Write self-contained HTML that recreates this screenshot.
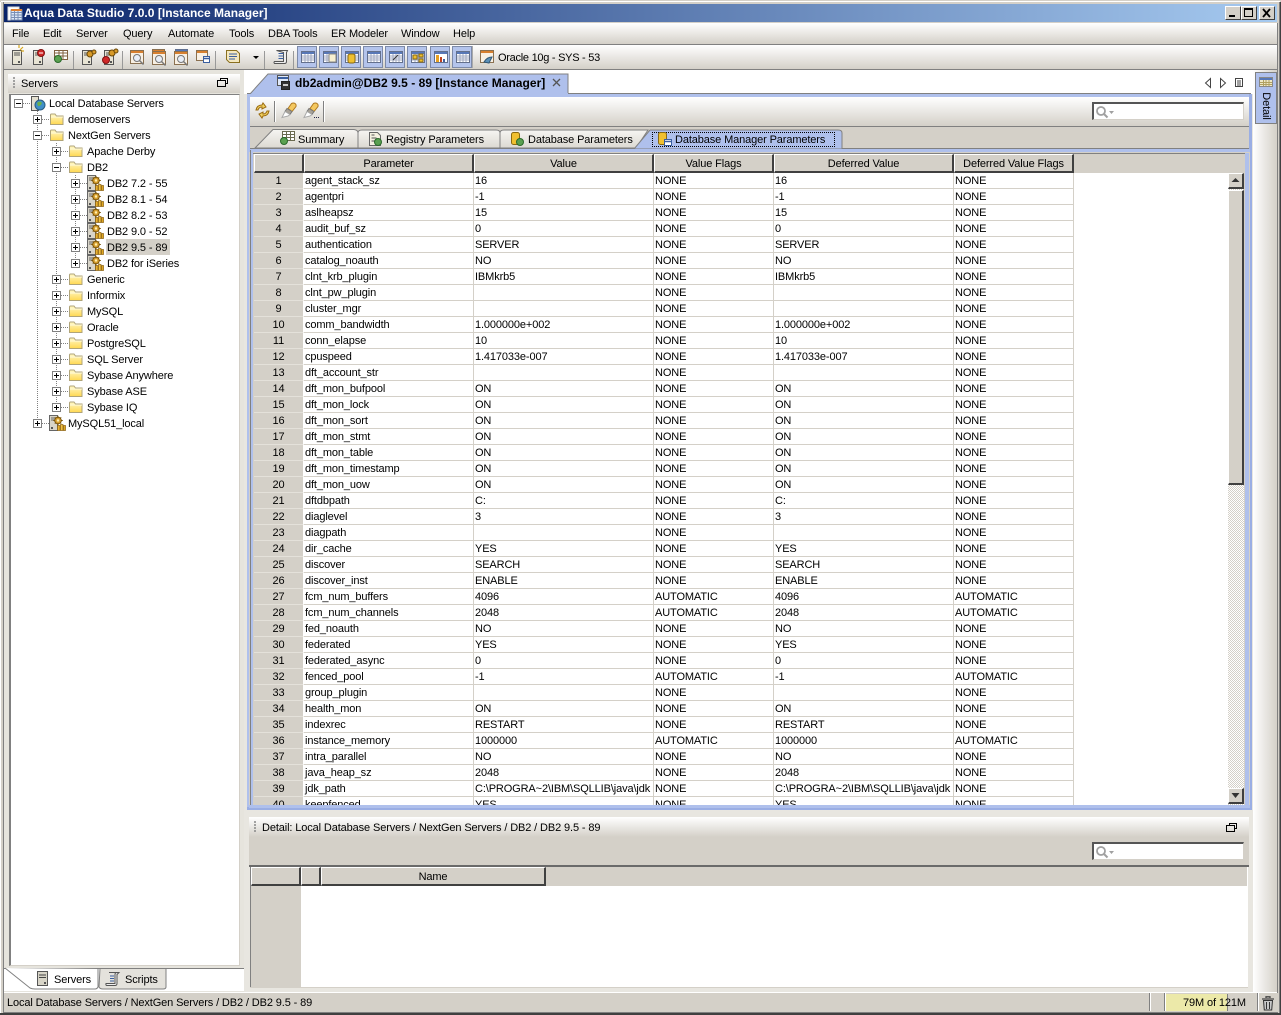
<!DOCTYPE html>
<html><head><meta charset="utf-8"><title>Aqua Data Studio 7.0.0 [Instance Manager]</title>
<style>
html,body{margin:0;padding:0;background:#d4d0c8}
body{position:relative;width:1281px;height:1015px;overflow:hidden;font:11px/16px "Liberation Sans",sans-serif;color:#000;letter-spacing:-.12px}
.a{position:absolute}
.t{position:absolute;white-space:nowrap;line-height:16px;height:16px;margin-top:1px}
.grad{background:linear-gradient(#fff,#d4d0c8)}
table{border-collapse:separate;border-spacing:0;table-layout:fixed;position:absolute;left:0;top:0;width:820px}
td{height:13px;padding:2px 0 0 1px;border-right:1px solid #d4d0c8;border-bottom:1px solid #d4d0c8;line-height:13px;white-space:nowrap;overflow:hidden;box-sizing:content-box}
td.r{background:#d4d0c8;text-align:center;border-right:1px solid #fff;border-bottom:1px solid #e4e1da;padding:2px 0 0 0}
.h{position:absolute;background:#d4d0c8;border-top:1px solid #fff;border-left:1px solid #fff;border-right:2px solid #404040;border-bottom:2px solid #404040;box-sizing:border-box;text-align:center;line-height:18px}
.tb{position:absolute;top:46px;width:20px;height:22px;background:#b4c4ec;border:1px solid #7d8aa8;box-sizing:border-box}
.sep{position:absolute;width:1px;background:#808080;border-right:1px solid #fff}
.search{position:absolute;width:152px;height:18px;background:#fff;border-top:2px solid #555;border-left:2px solid #555;border-right:1px solid #d4d0c8;border-bottom:1px solid #d4d0c8;box-sizing:border-box}
svg{position:absolute;overflow:visible}
</style></head><body>
<!-- chrome -->
<div class="a" style="left:0;top:0;width:1281px;height:1px;background:#d4d0c8"></div>
<div class="a" style="left:1px;top:1px;width:1279px;height:1px;background:#fff"></div>
<div class="a" style="left:4px;top:4px;width:1273px;height:18px;background:linear-gradient(90deg,#0a246a,#a6caf0)"></div>
<div class="t" style="left:24px;top:4px;color:#fff;font-weight:bold;font-size:12px;letter-spacing:.02px">Aqua Data Studio 7.0.0 [Instance Manager]</div>
<svg style="left:7px;top:6px" width="16" height="16"><rect x="1" y="1" width="11" height="13" fill="#fff" stroke="#ddd"/><rect x="4" y="4" width="11" height="10" fill="#dfe8f8" stroke="#7a8fb5"/><path d="M4 6.500h11M4 9h11M4 11.500h11M7.500 4v10M11 4v10" stroke="#7a8fb5"/><rect x="4" y="3" width="11" height="2" fill="#e08030"/></svg>
<!-- window buttons -->
<div class="a" style="left:1225px;top:6px;width:16px;height:14px;background:#d4d0c8;border-top:1px solid #fff;border-left:1px solid #fff;border-right:1px solid #404040;border-bottom:1px solid #404040;box-sizing:border-box"><div class="a" style="left:3px;top:8px;width:6px;height:2px;background:#000"></div></div>
<div class="a" style="left:1241px;top:6px;width:16px;height:14px;background:#d4d0c8;border-top:1px solid #fff;border-left:1px solid #fff;border-right:1px solid #404040;border-bottom:1px solid #404040;box-sizing:border-box"><div class="a" style="left:2px;top:1px;width:9px;height:9px;border:1px solid #000;border-top-width:2px;box-sizing:border-box"></div></div>
<div class="a" style="left:1259px;top:6px;width:16px;height:14px;background:#d4d0c8;border-top:1px solid #fff;border-left:1px solid #fff;border-right:1px solid #404040;border-bottom:1px solid #404040;box-sizing:border-box"><svg style="left:2px;top:1px" width="10" height="10"><path d="M1 1l7 8M8 1l-7 8" stroke="#000" stroke-width="1.800"/></svg></div>

<div class="a grad" style="left:4px;top:23px;width:1273px;height:21px"></div>
<div class="a" style="left:4px;top:44px;width:1273px;height:1px;background:#808080"></div>
<div class="t" style="left:12px;top:25px">File</div>
<div class="t" style="left:43px;top:25px">Edit</div>
<div class="t" style="left:76px;top:25px">Server</div>
<div class="t" style="left:123px;top:25px">Query</div>
<div class="t" style="left:168px;top:25px">Automate</div>
<div class="t" style="left:229px;top:25px">Tools</div>
<div class="t" style="left:268px;top:25px">DBA Tools</div>
<div class="t" style="left:331px;top:25px">ER Modeler</div>
<div class="t" style="left:401px;top:25px">Window</div>
<div class="t" style="left:453px;top:25px">Help</div>

<div class="a grad" style="left:4px;top:45px;width:1273px;height:24px"></div>
<div class="a" style="left:4px;top:69px;width:1273px;height:1px;background:#808080"></div>

<!-- main white areas -->
<div class="a" style="left:4px;top:70px;width:240px;height:922px;background:#e6e4dd"></div>
<div class="a" style="left:244px;top:70px;width:1009px;height:922px;background:#e8e6e0"></div>
<div class="a" style="left:244px;top:70px;width:1033px;height:24px;background:#fff"></div>
<div class="a" style="left:1253px;top:70px;width:24px;height:922px;background:linear-gradient(90deg,#fff,#d4d0c8)"></div>
<div class="a" style="left:1277px;top:23px;width:1px;height:970px;background:#808080"></div>

<!-- Left panel -->
<div class="a grad" style="left:8px;top:74px;width:232px;height:19px"></div>
<div class="t" style="left:21px;top:75px">Servers</div>
<div class="a" style="left:9px;top:94px;width:231px;height:872px;background:#fff;border:1px solid #808080;border-right-color:#d4d0c8;border-bottom-color:#d4d0c8;box-sizing:border-box;border-left-width:2px;border-top-width:1px"></div>
<div class="a" style="left:4px;top:968px;width:240px;height:23px;background:#fff;border-top:1px solid #808080;box-sizing:border-box"></div>
<!-- bottom tabs -->
<svg style="left:4px;top:966px" width="170" height="26">
<path d="M1 2 L26 22 Q28 23 31 23 H91 Q93 23 94 21 V3" fill="#fff" stroke="#808080"/>
<path d="M95 21 Q96 23 99 23 H159 Q162 23 162 21 V2.500 H96 Z" fill="#e4e2dc" stroke="#808080"/>
</svg>
<svg style="left:37px;top:971px" width="12" height="16"><rect x="0.500" y="0.500" width="10" height="14" fill="#d8d5c8" stroke="#555"/><path d="M2 4h7M2 6.500h7" stroke="#444"/><rect x="7" y="11" width="2" height="2" fill="#555"/></svg>
<svg style="left:105px;top:971px" width="16" height="16"><path d="M4 1.500h10l-2 2v9q0 2-2 2H2q-1.500 0-1-2h9V3.500q0-2 2-2" fill="#eee" stroke="#555"/><path d="M5 5h4M5 7.500h4M5 10h4" stroke="#3a5fa0"/></svg>
<div class="t" style="left:54px;top:971px">Servers</div>
<div class="t" style="left:125px;top:971px">Scripts</div>

<!-- Tree -->
<svg style="left:0;top:0" width="240" height="440">
<defs>
<linearGradient id="fg" x1="0" y1="0" x2="0" y2="1"><stop offset="0" stop-color="#fff8c8"/><stop offset="1" stop-color="#ffd850"/></linearGradient>
<symbol id="fo" width="16" height="16" overflow="visible"><path d="M1.500 4q0-1 1-1h3.500l1.500 2h6.500v8.500h-12.500z" fill="url(#fg)" stroke="#b0a478"/><path d="M2 6h12" stroke="#fffbe0"/></symbol>
<symbol id="ds" width="18" height="17" overflow="visible"><rect x="0.500" y="0.500" width="8" height="15" fill="#d8d4c8" stroke="#666"/><path d="M2 3h5M2 5h5" stroke="#666"/><rect x="2" y="12" width="2" height="2" fill="#555"/><circle cx="9" cy="5.500" r="3.300" fill="#d8a030" stroke="#7a5408"/><circle cx="9" cy="5.500" r="1.200" fill="#fff0b0"/><path d="M9 .8v1.500M9 8.800v1.500M4.300 5.500h1.500M12.300 5.500h1.500M5.800 2.300l1 1M12.200 2.300l-1 1M5.800 8.700l1-1M12.200 8.700l-1-1" stroke="#7a5408"/><rect x="8.500" y="10.500" width="2.500" height="5" fill="#e8b030" stroke="#8a6010" stroke-width=".7"/><rect x="11.500" y="9.500" width="2.500" height="6" fill="#f0c040" stroke="#8a6010" stroke-width=".7"/><rect x="14.500" y="10.500" width="2" height="5" fill="#e0a820" stroke="#8a6010" stroke-width=".7"/></symbol>
<symbol id="pl" width="9" height="9" overflow="visible"><rect x="0.500" y="0.500" width="8" height="8" fill="#fff" stroke="#808080"/><path d="M2 4.500h5M4.500 2v5" stroke="#000"/></symbol>
<symbol id="mi" width="9" height="9" overflow="visible"><rect x="0.500" y="0.500" width="8" height="8" fill="#fff" stroke="#808080"/><path d="M2 4.500h5" stroke="#000"/></symbol>
</defs>
<g stroke="#808080" stroke-dasharray="1 1" fill="none">
<path d="M37.500 111V419M56.500 143V403M75.500 175V259"/>
<path d="M23 103.500h7M42 119.500h7M42 135.500h7M42 423.500h7M61 151.500h7M61 167.500h7M61 279.500h7M61 295.500h7M61 311.500h7M61 327.500h7M61 343.500h7M61 359.500h7M61 375.500h7M61 391.500h7M61 407.500h7"/>
<path d="M80 183.500h7M80 199.500h7M80 215.500h7M80 231.500h7M80 247.500h7M80 263.500h7"/>
</g>
<use href="#mi" x="14" y="99"/><use href="#pl" x="33" y="115"/><use href="#mi" x="33" y="131"/><use href="#pl" x="33" y="419"/>
<use href="#pl" x="52" y="147"/><use href="#mi" x="52" y="163"/>
<use href="#pl" x="52" y="275"/><use href="#pl" x="52" y="291"/><use href="#pl" x="52" y="307"/><use href="#pl" x="52" y="323"/><use href="#pl" x="52" y="339"/><use href="#pl" x="52" y="355"/><use href="#pl" x="52" y="371"/><use href="#pl" x="52" y="387"/><use href="#pl" x="52" y="403"/>
<use href="#pl" x="71" y="179"/><use href="#pl" x="71" y="195"/><use href="#pl" x="71" y="211"/><use href="#pl" x="71" y="227"/><use href="#pl" x="71" y="243"/><use href="#pl" x="71" y="259"/>
<use href="#fo" x="49" y="111"/><use href="#fo" x="49" y="127"/>
<use href="#fo" x="68" y="143"/><use href="#fo" x="68" y="159"/><use href="#fo" x="68" y="271"/><use href="#fo" x="68" y="287"/><use href="#fo" x="68" y="303"/><use href="#fo" x="68" y="319"/><use href="#fo" x="68" y="335"/><use href="#fo" x="68" y="351"/><use href="#fo" x="68" y="367"/><use href="#fo" x="68" y="383"/><use href="#fo" x="68" y="399"/>
<use href="#ds" x="87" y="175"/><use href="#ds" x="87" y="191"/><use href="#ds" x="87" y="207"/><use href="#ds" x="87" y="223"/><use href="#ds" x="87" y="239"/><use href="#ds" x="87" y="255"/>
<use href="#ds" x="49" y="415"/>
<rect x="31.500" y="96.500" width="7" height="14" fill="#e4e0d0" stroke="#555"/><circle cx="40" cy="105" r="5" fill="#3f8fc8" stroke="#2a5a80"/><path d="M37 103q3-3 5 0q-1 3-4 3z" fill="#6ab04a"/>
</svg>
<div class="a" style="left:106px;top:239px;width:64px;height:16px;background:#d4d0c8"></div>
<div class="t" style="left:49px;top:95px">Local Database Servers</div>
<div class="t" style="left:68px;top:111px">demoservers</div>
<div class="t" style="left:68px;top:127px">NextGen Servers</div>
<div class="t" style="left:87px;top:143px">Apache Derby</div>
<div class="t" style="left:87px;top:159px">DB2</div>
<div class="t" style="left:107px;top:175px">DB2 7.2 - 55</div>
<div class="t" style="left:107px;top:191px">DB2 8.1 - 54</div>
<div class="t" style="left:107px;top:207px">DB2 8.2 - 53</div>
<div class="t" style="left:107px;top:223px">DB2 9.0 - 52</div>
<div class="t" style="left:107px;top:239px">DB2 9.5 - 89</div>
<div class="t" style="left:107px;top:255px">DB2 for iSeries</div>
<div class="t" style="left:87px;top:271px">Generic</div>
<div class="t" style="left:87px;top:287px">Informix</div>
<div class="t" style="left:87px;top:303px">MySQL</div>
<div class="t" style="left:87px;top:319px">Oracle</div>
<div class="t" style="left:87px;top:335px">PostgreSQL</div>
<div class="t" style="left:87px;top:351px">SQL Server</div>
<div class="t" style="left:87px;top:367px">Sybase Anywhere</div>
<div class="t" style="left:87px;top:383px">Sybase ASE</div>
<div class="t" style="left:87px;top:399px">Sybase IQ</div>
<div class="t" style="left:68px;top:415px">MySQL51_local</div>

<!-- Right: editor tab -->
<div class="a" style="left:247px;top:93px;width:1004px;height:1px;background:#808080"></div>
<svg style="left:244px;top:70px" width="330" height="26"><path d="M6 24 L24 4 H324 V24 Z" fill="#afc0ec"/><path d="M6 24 L24 4 H324 V23" fill="none" stroke="#808080"/></svg>
<div class="t" style="left:295px;top:74px;font-weight:bold;font-size:12px;letter-spacing:.03px">db2admin@DB2 9.5 - 89 [Instance Manager]</div>
<svg style="left:552px;top:78px" width="10" height="10"><path d="M1 1l7 7M8 1l-7 7" stroke="#555" stroke-width="1.300"/></svg>
<svg style="left:277px;top:75px" width="15" height="16"><rect x="0.500" y="0.500" width="11" height="10" fill="#dfe8f8" stroke="#555"/><path d="M1 3h10" stroke="#3a5fa0" stroke-width="2"/><rect x="4.500" y="6.500" width="8" height="8" fill="#333" stroke="#222"/><rect x="6" y="9" width="5" height="2" fill="#ccc"/></svg>
<svg style="left:1202px;top:77px" width="44" height="12"><path d="M8.500 1.500L3.500 6l5 4.500z" fill="#fff" stroke="#444"/><path d="M18.500 1.500l5 4.500-5 4.500z" fill="#fff" stroke="#444"/><rect x="33.500" y="1.500" width="7" height="8" fill="#fff" stroke="#444"/><path d="M35 4h4M35 6h4M35 8h4" stroke="#444"/></svg>
<!-- detail side tab -->
<div class="a" style="left:1255px;top:72px;width:22px;height:52px;background:#afc0ec;border:1px solid #808080;box-sizing:border-box"></div>
<svg style="left:1259px;top:77px" width="14" height="11"><rect x="0.500" y="0.500" width="13" height="9" fill="#eee8c8" stroke="#888"/><rect x="1" y="1" width="12" height="2" fill="#5878b8"/><path d="M1 5.500h12M1 7.500h12M4.500 3v6M7 3v6M10 3v6" stroke="#b0a060"/></svg>
<div class="t" style="left:1242px;top:97px;width:48px;text-align:center;transform:rotate(90deg)">Detail</div>

<!-- content frame -->
<div class="a" style="left:247px;top:94px;width:4px;height:716px;background:#afc0ec"></div>
<div class="a" style="left:247px;top:94px;width:1004px;height:3px;background:#afc0ec"></div>
<div class="a" style="left:1249px;top:94px;width:3px;height:716px;background:#9aaee4"></div>
<div class="a" style="left:247px;top:807px;width:1005px;height:3px;background:#9aaee4"></div>
<div class="a" style="left:250px;top:97px;width:999px;height:29px;background:linear-gradient(#fff,#d4d0c8)"></div>
<div class="a" style="left:250px;top:126px;width:999px;height:1px;background:#808080"></div>
<div class="a" style="left:250px;top:127px;width:999px;height:23px;background:#d4d0c8"></div>
<div class="sep" style="left:274px;top:101px;height:21px"></div>
<div class="sep" style="left:323px;top:101px;height:21px"></div>
<svg style="left:254px;top:102px" width="18" height="18"><path d="M2 8q1-5 6-5l1-2 3 4-4 2 0-2q-3 0-4 3zM15 9q-1 5-6 5l-1 2-3-4 4-2 0 2q3 0 4-3z" fill="#f0d060" stroke="#9a6a10"/></svg>
<svg style="left:281px;top:102px" width="18" height="18"><path d="M10.500 1.500q2-1 3.500 0t1 3l-4 5-4-3z" fill="#f4c860" stroke="#b07a20"/><path d="M6 6.500l5 3-2 3-5-3z" fill="#a8a298" stroke="#777"/><path d="M4 9.500l5 3-2 1.500-6 1.500z" fill="#fff" stroke="#aaa"/></svg>
<svg style="left:303px;top:102px" width="18" height="18"><path d="M10.500 1.500q2-1 3.500 0t1 3l-4 5-4-3z" fill="#f4c860" stroke="#b07a20"/><path d="M6 6.500l5 3-2 3-5-3z" fill="#a8a298" stroke="#777"/><path d="M4 9.500l5 3-2 1.500-6 1.500z" fill="#fff" stroke="#aaa"/><path d="M11 15.500h1M13 15.500h1M15 15.500h1" stroke="#224"/></svg>
<div class="search" style="left:1092px;top:102px"><svg style="left:1px;top:1px" width="22" height="14"><circle cx="6" cy="6" r="4" fill="#fff" stroke="#a0a0a0" stroke-width="1.800"/><path d="M9 9l3.500 3.500" stroke="#a0a0a0" stroke-width="2"/><path d="M14 6h5l-2.500 3z" fill="#a0a0a0"/></svg></div>

<!-- sub tabs -->
<div class="a" style="left:250px;top:148px;width:999px;height:2px;background:#808080"></div>
<svg style="left:250px;top:127px" width="600" height="24">
<defs><linearGradient id="stg" x1="0" y1="0" x2="0" y2="1"><stop offset="0" stop-color="#f6f5f2"/><stop offset="1" stop-color="#dcd9d2"/></linearGradient></defs>
<path d="M386 21 L398 3 H254 Q250 3 250 6 V21 Z" fill="url(#stg)" stroke="#808080"/>
<path d="M108 21 V6 Q108 3 112 3 H246 Q250 3 250 6 V21 Z" fill="url(#stg)" stroke="#808080"/>
<path d="M5 21 L23 2.500 H104 Q108 3 108 6 V21 Z" fill="url(#stg)" stroke="#808080"/>
<path d="M384 22 L400 3 H588 Q592 3 592 6 V22 Z" fill="#afc0ec" stroke="#808080"/>
</svg>
<div class="a" style="left:652px;top:132px;width:183px;height:15px;border:1px dotted #000;box-sizing:border-box"></div>
<div class="a" style="left:249px;top:149px;width:1001px;height:3px;background:#afc0ec"></div>
<svg style="left:280px;top:131px" width="16" height="16"><rect x="2.500" y="0.500" width="12" height="9" fill="#fff" stroke="#6a6a50"/><path d="M3 3.500h11M3 6.500h11M6.500 1v8M10.500 1v8" stroke="#6a6a50"/><circle cx="4" cy="10" r="3.500" fill="#5aa050" stroke="#2a6a2a"/></svg>
<svg style="left:368px;top:131px" width="16" height="16"><path d="M1.500 1.500h8l3 3v10h-11z" fill="#f4f0e0" stroke="#666"/><path d="M3.500 4h3M3.500 7h5M3.500 10h3" stroke="#555"/><circle cx="10" cy="11" r="3.500" fill="#5aa050" stroke="#2a6a2a"/></svg>
<svg style="left:510px;top:131px" width="16" height="16"><rect x="1.500" y="1.500" width="8" height="12" rx="2" fill="#f0c030" stroke="#8a6a10"/><circle cx="10" cy="11" r="3.500" fill="#5aa050" stroke="#2a6a2a"/></svg>
<svg style="left:657px;top:131px" width="16" height="16"><rect x="1.500" y="1.500" width="8" height="12" rx="2" fill="#f0c030" stroke="#8a6a10"/><rect x="7.500" y="8.500" width="7" height="6" fill="#fff" stroke="#3a5fa0"/><path d="M8 10.500h6" stroke="#3a5fa0" stroke-width="1.500"/></svg>
<div class="t" style="left:298px;top:131px">Summary</div>
<div class="t" style="left:386px;top:131px">Registry Parameters</div>
<div class="t" style="left:528px;top:131px">Database Parameters</div>
<div class="t" style="left:675px;top:131px">Database Manager Parameters</div>

<!-- table frame -->
<div class="a" style="left:249px;top:152px;width:1001px;height:655px;background:#d4d0c8"></div>
<div class="a" style="left:250px;top:150px;width:1px;height:657px;background:#808080"></div>
<div class="a" style="left:251px;top:150px;width:2px;height:657px;background:#afc0ec"></div>
<div class="a" style="left:253px;top:153px;width:992px;height:1px;background:#808080"></div>
<div class="a" style="left:1245px;top:153px;width:4px;height:654px;background:#afc0ec"></div>
<div class="a" style="left:249px;top:805px;width:1001px;height:3px;background:#afc0ec"></div>
<div class="h" style="left:254px;top:154px;width:50px;height:19px"></div>
<div class="h" style="left:304px;top:154px;width:170px;height:19px">Parameter</div>
<div class="h" style="left:474px;top:154px;width:180px;height:19px">Value</div>
<div class="h" style="left:654px;top:154px;width:120px;height:19px">Value Flags</div>
<div class="h" style="left:774px;top:154px;width:180px;height:19px">Deferred Value</div>
<div class="h" style="left:954px;top:154px;width:120px;height:19px">Deferred Value Flags</div>

<div class="a" style="left:254px;top:173px;width:974px;height:632px;overflow:hidden;background:#fff">
<table style="width:820px"><colgroup><col style="width:50px"><col style="width:170px"><col style="width:180px"><col style="width:120px"><col style="width:180px"><col style="width:120px"></colgroup>
<tr><td class="r">1</td><td>agent_stack_sz</td><td>16</td><td>NONE</td><td>16</td><td>NONE</td></tr>
<tr><td class="r">2</td><td>agentpri</td><td>-1</td><td>NONE</td><td>-1</td><td>NONE</td></tr>
<tr><td class="r">3</td><td>aslheapsz</td><td>15</td><td>NONE</td><td>15</td><td>NONE</td></tr>
<tr><td class="r">4</td><td>audit_buf_sz</td><td>0</td><td>NONE</td><td>0</td><td>NONE</td></tr>
<tr><td class="r">5</td><td>authentication</td><td>SERVER</td><td>NONE</td><td>SERVER</td><td>NONE</td></tr>
<tr><td class="r">6</td><td>catalog_noauth</td><td>NO</td><td>NONE</td><td>NO</td><td>NONE</td></tr>
<tr><td class="r">7</td><td>clnt_krb_plugin</td><td>IBMkrb5</td><td>NONE</td><td>IBMkrb5</td><td>NONE</td></tr>
<tr><td class="r">8</td><td>clnt_pw_plugin</td><td></td><td>NONE</td><td></td><td>NONE</td></tr>
<tr><td class="r">9</td><td>cluster_mgr</td><td></td><td>NONE</td><td></td><td>NONE</td></tr>
<tr><td class="r">10</td><td>comm_bandwidth</td><td>1.000000e+002</td><td>NONE</td><td>1.000000e+002</td><td>NONE</td></tr>
<tr><td class="r">11</td><td>conn_elapse</td><td>10</td><td>NONE</td><td>10</td><td>NONE</td></tr>
<tr><td class="r">12</td><td>cpuspeed</td><td>1.417033e-007</td><td>NONE</td><td>1.417033e-007</td><td>NONE</td></tr>
<tr><td class="r">13</td><td>dft_account_str</td><td></td><td>NONE</td><td></td><td>NONE</td></tr>
<tr><td class="r">14</td><td>dft_mon_bufpool</td><td>ON</td><td>NONE</td><td>ON</td><td>NONE</td></tr>
<tr><td class="r">15</td><td>dft_mon_lock</td><td>ON</td><td>NONE</td><td>ON</td><td>NONE</td></tr>
<tr><td class="r">16</td><td>dft_mon_sort</td><td>ON</td><td>NONE</td><td>ON</td><td>NONE</td></tr>
<tr><td class="r">17</td><td>dft_mon_stmt</td><td>ON</td><td>NONE</td><td>ON</td><td>NONE</td></tr>
<tr><td class="r">18</td><td>dft_mon_table</td><td>ON</td><td>NONE</td><td>ON</td><td>NONE</td></tr>
<tr><td class="r">19</td><td>dft_mon_timestamp</td><td>ON</td><td>NONE</td><td>ON</td><td>NONE</td></tr>
<tr><td class="r">20</td><td>dft_mon_uow</td><td>ON</td><td>NONE</td><td>ON</td><td>NONE</td></tr>
<tr><td class="r">21</td><td>dftdbpath</td><td>C:</td><td>NONE</td><td>C:</td><td>NONE</td></tr>
<tr><td class="r">22</td><td>diaglevel</td><td>3</td><td>NONE</td><td>3</td><td>NONE</td></tr>
<tr><td class="r">23</td><td>diagpath</td><td></td><td>NONE</td><td></td><td>NONE</td></tr>
<tr><td class="r">24</td><td>dir_cache</td><td>YES</td><td>NONE</td><td>YES</td><td>NONE</td></tr>
<tr><td class="r">25</td><td>discover</td><td>SEARCH</td><td>NONE</td><td>SEARCH</td><td>NONE</td></tr>
<tr><td class="r">26</td><td>discover_inst</td><td>ENABLE</td><td>NONE</td><td>ENABLE</td><td>NONE</td></tr>
<tr><td class="r">27</td><td>fcm_num_buffers</td><td>4096</td><td>AUTOMATIC</td><td>4096</td><td>AUTOMATIC</td></tr>
<tr><td class="r">28</td><td>fcm_num_channels</td><td>2048</td><td>AUTOMATIC</td><td>2048</td><td>AUTOMATIC</td></tr>
<tr><td class="r">29</td><td>fed_noauth</td><td>NO</td><td>NONE</td><td>NO</td><td>NONE</td></tr>
<tr><td class="r">30</td><td>federated</td><td>YES</td><td>NONE</td><td>YES</td><td>NONE</td></tr>
<tr><td class="r">31</td><td>federated_async</td><td>0</td><td>NONE</td><td>0</td><td>NONE</td></tr>
<tr><td class="r">32</td><td>fenced_pool</td><td>-1</td><td>AUTOMATIC</td><td>-1</td><td>AUTOMATIC</td></tr>
<tr><td class="r">33</td><td>group_plugin</td><td></td><td>NONE</td><td></td><td>NONE</td></tr>
<tr><td class="r">34</td><td>health_mon</td><td>ON</td><td>NONE</td><td>ON</td><td>NONE</td></tr>
<tr><td class="r">35</td><td>indexrec</td><td>RESTART</td><td>NONE</td><td>RESTART</td><td>NONE</td></tr>
<tr><td class="r">36</td><td>instance_memory</td><td>1000000</td><td>AUTOMATIC</td><td>1000000</td><td>AUTOMATIC</td></tr>
<tr><td class="r">37</td><td>intra_parallel</td><td>NO</td><td>NONE</td><td>NO</td><td>NONE</td></tr>
<tr><td class="r">38</td><td>java_heap_sz</td><td>2048</td><td>NONE</td><td>2048</td><td>NONE</td></tr>
<tr><td class="r">39</td><td>jdk_path</td><td>C:\PROGRA~2\IBM\SQLLIB\java\jdk</td><td>NONE</td><td>C:\PROGRA~2\IBM\SQLLIB\java\jdk</td><td>NONE</td></tr>
<tr><td class="r">40</td><td>keepfenced</td><td>YES</td><td>NONE</td><td>YES</td><td>NONE</td></tr>
</table>
</div>
<!-- scrollbar -->
<div class="a" style="left:1228px;top:173px;width:16px;height:632px;background:repeating-conic-gradient(#d4d0c8 0 25%,#fff 0 50%) 0 0/2px 2px"></div>
<div class="a" style="left:1228px;top:173px;width:16px;height:16px;background:#d4d0c8;border-top:1px solid #fff;border-left:1px solid #fff;border-right:2px solid #404040;border-bottom:2px solid #404040;box-sizing:border-box"></div>
<div class="a" style="left:1228px;top:190px;width:16px;height:295px;background:#d4d0c8;border-top:1px solid #fff;border-left:1px solid #fff;border-right:2px solid #404040;border-bottom:2px solid #404040;box-sizing:border-box"></div>
<div class="a" style="left:1228px;top:788px;width:16px;height:16px;background:#d4d0c8;border-top:1px solid #fff;border-left:1px solid #fff;border-right:2px solid #404040;border-bottom:2px solid #404040;box-sizing:border-box"></div>
<svg style="left:1231px;top:177px" width="10" height="6"><path d="M0.500 5h8L4.500 1z" fill="#333"/></svg>
<svg style="left:1231px;top:793px" width="10" height="6"><path d="M0.500 0h8L4.500 5z" fill="#333"/></svg>

<!-- Detail panel -->
<div class="a" style="left:249px;top:817px;width:1000px;height:20px;background:linear-gradient(#fff,#d4d0c8)"></div>
<div class="t" style="left:262px;top:819px">Detail: Local Database Servers / NextGen Servers / DB2 / DB2 9.5 - 89</div>
<div class="a" style="left:249px;top:837px;width:1000px;height:29px;background:#d4d0c8"></div>
<div class="a" style="left:249px;top:865px;width:1000px;height:2px;background:#6a6a6a"></div>
<div class="search" style="left:1092px;top:842px"><svg style="left:1px;top:1px" width="22" height="14"><circle cx="6" cy="6" r="4" fill="#fff" stroke="#a0a0a0" stroke-width="1.800"/><path d="M9 9l3.500 3.500" stroke="#a0a0a0" stroke-width="2"/><path d="M14 6h5l-2.500 3z" fill="#a0a0a0"/></svg></div>
<div class="a" style="left:250px;top:867px;width:998px;height:121px;background:#fff"></div>
<div class="a" style="left:250px;top:867px;width:997px;height:19px;background:#d4d0c8"></div>
<div class="a" style="left:250px;top:886px;width:51px;height:101px;background:#d4d0c8"></div>
<div class="a" style="left:250px;top:867px;width:1px;height:121px;background:#808080"></div>
<div class="a" style="left:250px;top:987px;width:998px;height:1px;background:#d4d0c8"></div>
<div class="h" style="left:251px;top:867px;width:50px;height:19px"></div>
<div class="h" style="left:301px;top:867px;width:20px;height:19px"></div>
<div class="h" style="left:321px;top:867px;width:225px;height:19px">Name</div>
<!-- dock icons -->
<svg style="left:217px;top:77px" width="12" height="12"><path d="M3.500 3.500v-2h7v5h-2" fill="none" stroke="#000"/><rect x="0.500" y="3.500" width="8" height="6" fill="none" stroke="#000" stroke-width="1"/></svg>
<svg style="left:1226px;top:822px" width="12" height="12"><path d="M3.500 3.500v-2h7v5h-2" fill="none" stroke="#000"/><rect x="0.500" y="3.500" width="8" height="6" fill="none" stroke="#000"/></svg>
<svg style="left:12px;top:77px" width="4" height="14"><path d="M1 1h2M1 4h2M1 7h2M1 10h2" stroke="#888" stroke-width="1.500"/></svg>
<svg style="left:253px;top:821px" width="4" height="14"><path d="M1 1h2M1 4h2M1 7h2M1 10h2" stroke="#888" stroke-width="1.500"/></svg>

<!-- Toolbar icons -->
<svg style="left:0;top:45px" width="300" height="24">
<defs>
<symbol id="ts" width="14" height="16" overflow="visible"><rect x="0.500" y="0.500" width="9" height="14" fill="#e8e4d4" stroke="#555"/><path d="M2 3h6M2 5h6" stroke="#555"/><rect x="6" y="11" width="2" height="2" fill="#555"/></symbol>
<symbol id="tw" width="16" height="16" overflow="visible"><rect x="0.500" y="0.500" width="13" height="13" fill="#f8f0e4" stroke="#8a7050"/><rect x="1" y="1" width="12" height="2" fill="#d88030"/><circle cx="7" cy="8" r="3.500" fill="#e8eef8" stroke="#777"/><path d="M9.500 10.500l4 4" stroke="#777" stroke-width="1.500"/></symbol>
</defs>
<use href="#ts" x="12" y="5"/><path d="M20 5l3-3M21 6h3M19 3V0" stroke="#d8a820" stroke-width="1.200"/>
<use href="#ts" x="33" y="5"/><circle cx="41" cy="8" r="3.500" fill="#d02828" stroke="#801010"/><path d="M39 8h4" stroke="#fff"/>
<rect x="54.500" y="5.500" width="13" height="9" fill="#fff" stroke="#806040"/><path d="M55 8h12M55 11h12M59 6v8M63 6v8" stroke="#806040"/><circle cx="58" cy="14" r="3.500" fill="#5aa050" stroke="#2a6a2a"/>
<path d="M73.500 6v18" stroke="#999"/>
<use href="#ts" x="82" y="5"/><circle cx="90" cy="9" r="3" fill="#d89a28" stroke="#6a4808"/><circle cx="94" cy="7" r="2" fill="#d89a28" stroke="#6a4808"/>
<use href="#ts" x="104" y="5"/><circle cx="112" cy="8" r="3" fill="#d89a28" stroke="#6a4808"/><circle cx="116" cy="6" r="2" fill="#d89a28" stroke="#6a4808"/><circle cx="106" cy="15" r="3.500" fill="#d02828" stroke="#801010"/>
<path d="M122.500 6v18" stroke="#999"/>
<use href="#tw" x="130" y="5"/>
<rect x="152.500" y="4.500" width="12" height="3" fill="#d88030" stroke="#8a7050"/><use href="#tw" x="152" y="6"/>
<rect x="175.500" y="4.500" width="12" height="3" fill="#5878b8" stroke="#607090"/><use href="#tw" x="174" y="6"/>
<rect x="196.500" y="5.500" width="11" height="10" fill="#f8f0e4" stroke="#8a7050"/><rect x="197" y="6" width="10" height="2" fill="#d88030"/><rect x="203.500" y="11.500" width="6" height="6" fill="#fff" stroke="#3a5fa0"/><path d="M204 13.500h5" stroke="#3a5fa0" stroke-width="1.500"/>
<path d="M215.500 6v18" stroke="#999"/>
<path d="M226.500 5.500h10l3 3v9h-10l-3-3z" fill="#f4e8c0" stroke="#8a7020"/><path d="M229 9h8M229 11.500h8M229 14h6" stroke="#3a5fa0"/>
<path d="M253 11h6l-3 3z" fill="#000"/>
<path d="M264.500 6v18" stroke="#999"/>
<path d="M276.500 5.500h11l-1 2v9q0 2-2 2h-10q-1-1 0-2h9v-9z" fill="#eee" stroke="#555"/><path d="M278.500 8.500h5M278.500 11h5M278.500 13.500h5" stroke="#3a5fa0"/>
<path d="M293.500 6v18" stroke="#999"/>
</svg>
<!-- toggle buttons -->
<div class="tb" style="left:297px"></div><div class="tb" style="left:319px"></div><div class="tb" style="left:341px"></div><div class="tb" style="left:363px"></div><div class="tb" style="left:385px"></div><div class="tb" style="left:407px"></div><div class="tb" style="left:430px"></div><div class="tb" style="left:452px"></div>
<svg style="left:0;top:0" width="480" height="70">
<defs><symbol id="tt" width="14" height="12" overflow="visible"><rect x="0.500" y="0.500" width="13" height="11" fill="#fff" stroke="#64708c"/><rect x="1" y="1" width="12" height="2" fill="#5878b8"/><path d="M1 5h12M1 7h12M1 9h12M4 3v8M7 3v8M10 3v8" stroke="#a0a8c0"/></symbol></defs>
<use href="#tt" x="301" y="51"/>
<use href="#tt" x="323" y="51"/><rect x="329" y="54" width="7" height="8" fill="#f8f0d0" stroke="#888"/>
<use href="#tt" x="345" y="51"/><rect x="348" y="54" width="7" height="9" rx="2" fill="#f0c030" stroke="#8a6a10"/>
<use href="#tt" x="367" y="51"/>
<use href="#tt" x="389" y="51"/><path d="M393 60l5-5" stroke="#333"/>
<use href="#tt" x="411" y="51"/><rect x="413" y="55" width="4" height="4" fill="#f0c030" stroke="#8a6a10"/><rect x="419" y="54" width="4" height="3" fill="#f0c030" stroke="#8a6a10"/><rect x="419" y="59" width="4" height="3" fill="#f0c030" stroke="#8a6a10"/>
<use href="#tt" x="434" y="51"/><rect x="435" y="54" width="12" height="8" fill="#fff"/><rect x="436" y="55" width="3" height="7" fill="#e8a020"/><rect x="440" y="57" width="2" height="5" fill="#c04020"/><rect x="443" y="59" width="2" height="3" fill="#4060a0"/>
<use href="#tt" x="456" y="51"/>
<rect x="480.500" y="50.500" width="13" height="12" fill="#f8f0e4" stroke="#8a7050"/><rect x="481" y="51" width="12" height="2" fill="#d88030"/><path d="M484 62q3-5 8-5l-3 6z" fill="#5a90b8" stroke="#305878"/>
<path d="M472.500 46v22" stroke="#aaa"/>
</svg>
<div class="t" style="left:498px;top:49px;letter-spacing:-.27px">Oracle 10g - SYS - 53</div>

<!-- status bar -->
<div class="a" style="left:4px;top:992px;width:1273px;height:20px;background:#d4d0c8;border-top:1px solid #fff;box-sizing:border-box"></div>
<div class="a" style="left:0;top:1012px;width:1281px;height:1px;background:#808080"></div>
<div class="a" style="left:0;top:1013px;width:1281px;height:2px;background:#404040"></div>
<div class="t" style="left:7px;top:994px">Local Database Servers / NextGen Servers / DB2 / DB2 9.5 - 89</div>
<div class="a" style="left:1166px;top:994px;width:61px;height:17px;background:#ece9a9"></div>
<div class="a" style="left:1227px;top:994px;width:1px;height:17px;background:#808080"></div>
<div class="t" style="left:1183px;top:994px">79M of 121M</div>
<div class="sep" style="left:1149px;top:993px;height:18px"></div>
<div class="sep" style="left:1164px;top:993px;height:18px"></div>
<div class="sep" style="left:1257px;top:993px;height:18px"></div>
<svg style="left:1261px;top:996px" width="14" height="15"><path d="M1 3h12M5 2V.8h4V2" fill="none" stroke="#444" stroke-width="1.300"/><path d="M2.500 4.500h9l-.8 9.500H3.300z" fill="#c8c8c8" stroke="#333"/><path d="M5.500 6v7M8.500 6v7" stroke="#333"/></svg>
<div class="a" style="left:0;top:2px;width:4px;height:1011px;background:linear-gradient(90deg,#fff 0 1px,#d4d0c8 1px 3px,#808080 3px)"></div>
<div class="a" style="left:1278px;top:2px;width:3px;height:1011px;background:linear-gradient(90deg,#d4d0c8 0 1px,#808080 1px 2px,#404040 2px)"></div>
</body></html>
